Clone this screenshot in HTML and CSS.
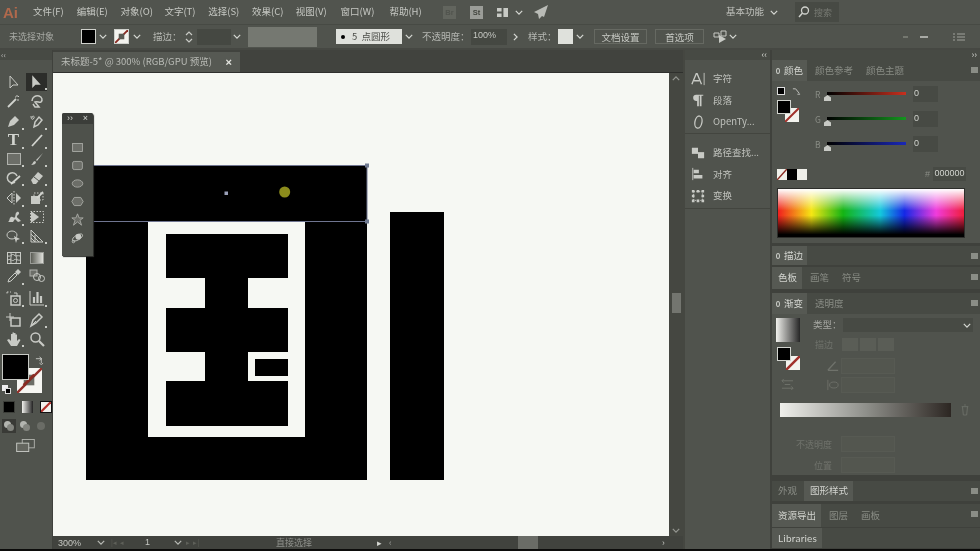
FILE: index.html
```html
<!DOCTYPE html>
<html lang="zh-CN">
<head>
<meta charset="utf-8">
<title>Illustrator</title>
<link rel="stylesheet" href="styles.css">
</head>
<body>
<div class="app">
  <header class="menubar">
    <span class="logo">Ai</span>
    <nav class="menus">
      <span>文件(F)</span><span>编辑(E)</span><span>对象(O)</span><span>文字(T)</span><span>选择(S)</span><span>效果(C)</span><span>视图(V)</span><span>窗口(W)</span><span>帮助(H)</span>
    </nav>
    <span class="app-box dim">Br</span>
    <span class="app-box">St</span>
    <svg class="arrange" viewBox="0 0 14 12"><path d="M1 1h5v4H1zM8 1h5v10H8zM1 7h5v4H1z" fill="#c8cac5"/></svg>
    <svg class="chev menu-chev" viewBox="0 0 10 6"><path d="M1 1l4 4 4-4"/></svg>
    <svg class="rocket" viewBox="0 0 16 16"><path d="M15 1L1 8l4 2 1 5 3-3 2 1z" fill="#b9bbb6"/></svg>
    <span class="workspace">基本功能</span>
    <svg class="chev ws-chev" viewBox="0 0 10 6"><path d="M1 1l4 4 4-4"/></svg>
    <div class="search"><svg viewBox="0 0 14 14"><circle cx="8" cy="5.500" r="3.500" fill="none" stroke="#d0d2cd" stroke-width="1.300"/><path d="M5.500 8L2 12" stroke="#d0d2cd" stroke-width="1.500"/></svg><span>搜索</span></div>
  </header>

  <section class="ctrl">
    <span class="c-nosel">未选择对象</span>
    <span class="sw sw-black"></span>
    <svg class="chev c1" viewBox="0 0 10 6"><path d="M1 1l4 4 4-4"/></svg>
    <span class="sw sw-none"><svg viewBox="0 0 14 14"><path d="M0 14L14 0" stroke="#8a2b22" stroke-width="2"/><rect x="4" y="4" width="6" height="6" fill="#5a5a52"/></svg></span>
    <svg class="chev c2" viewBox="0 0 10 6"><path d="M1 1l4 4 4-4"/></svg>
    <span class="c-label c-stroke">描边：</span>
    <svg class="spin" viewBox="0 0 8 14"><path d="M1 5l3-3 3 3M1 9l3 3 3-3" fill="none" stroke="#c8cac5" stroke-width="1.200"/></svg>
    <span class="field f-stroke"></span>
    <svg class="chev c3" viewBox="0 0 10 6"><path d="M1 1l4 4 4-4"/></svg>
    <span class="field f-light"></span>
    <span class="brush"><i></i>5&nbsp; 点圆形</span>
    <svg class="chev c4" viewBox="0 0 10 6"><path d="M1 1l4 4 4-4"/></svg>
    <span class="c-label c-op">不透明度：</span>
    <span class="field f-op">100%</span>
    <svg class="chev c5" viewBox="0 0 6 10"><path d="M1 1l4 4-4 4"/></svg>
    <span class="c-label c-style">样式：</span>
    <span class="sw sw-style"></span>
    <svg class="chev c6" viewBox="0 0 10 6"><path d="M1 1l4 4 4-4"/></svg>
    <span class="btn b-doc">文档设置</span>
    <span class="btn b-pref">首选项</span>
    <svg class="c-arr" viewBox="0 0 14 14"><path d="M1 3h5v4H1zM8 1h5v5H8z" fill="none" stroke="#c8cac5"/><path d="M6 5l7 4-7 4z" fill="#c8cac5"/></svg>
    <svg class="chev c7" viewBox="0 0 10 6"><path d="M1 1l4 4 4-4"/></svg>
    <span class="c-right"><i class="d1"></i><i class="d2"></i><svg viewBox="0 0 12 8"><path d="M0 1h2M4 1h8M0 4h2M4 4h8M0 7h2M4 7h8" stroke="#9fa29c"/></svg></span>
  </section>

  <div class="main">
    <aside class="tools">
      <div class="collapse">‹‹</div>
      <div class="tool-row g0">
        <b class="t plain"><svg viewBox="0 0 16 16"><path d="M4 2v12l3-3h5z" class="ol"/></svg></b>
        <b class="t on"><svg viewBox="0 0 16 16"><path d="M4 2v12l3-3h5z" class="fl"/></svg></b>
      </div>
      <div class="tool-row">
        <b class="t plain"><svg viewBox="0 0 16 16"><path d="M2 14l8-8" class="th"/><path d="M11 2v2M9 4h1M13 3l-1 1M13 7h-2" class="ol"/></svg></b>
        <b class="t plain"><svg viewBox="0 0 16 16"><path d="M3 8c0-4 4-6 7-5s4 4 2 6c-2 1-3-1-6 0l4 5H6L4 11" class="ol2"/></svg></b>
      </div>
      <div class="tool-row g2">
        <b class="t"><svg viewBox="0 0 16 16"><path d="M2 14l2-6 5-5 4 4-5 5z" class="fl"/></svg></b>
        <b class="t"><svg viewBox="0 0 16 16"><path d="M2 3c0 4 2 4 3 2s-2-3-2 0" class="ol"/><path d="M5 14l1-5 4-5 3 3-4 5z" class="ol2"/></svg></b>
      </div>
      <div class="tool-row">
        <b class="t type">T</b>
        <b class="t"><svg viewBox="0 0 16 16"><path d="M3 14L13 3" class="th"/></svg></b>
      </div>
      <div class="tool-row">
        <b class="t"><svg viewBox="0 0 16 16"><rect x="1.500" y="2.500" width="13" height="11" class="rc"/></svg></b>
        <b class="t"><svg viewBox="0 0 16 16"><path d="M14 2L7 9l1 1zM6 10c-2 0-2 3-4 4 3 0 5-1 5-3z" class="fl"/></svg></b>
      </div>
      <div class="tool-row">
        <b class="t"><svg viewBox="0 0 16 16"><path d="M9 12a5 5 0 1 1 2-6" class="ol2"/><path d="M5 14l9-8" class="th"/></svg></b>
        <b class="t"><svg viewBox="0 0 16 16"><path d="M2 10l7-8 5 4-7 8H4z" class="fl"/><path d="M5 7l5 4" stroke="#51544e"/></svg></b>
      </div>
      <div class="tool-row g2">
        <b class="t"><svg viewBox="0 0 16 16"><path d="M6 3L1 8l5 5z" class="ol"/><path d="M10 3l5 5-5 5z" class="fl"/><path d="M8 1v14" class="dash"/></svg></b>
        <b class="t"><svg viewBox="0 0 16 16"><path d="M2 6h9v8H2z" class="fl"/><path d="M5 6V3h9v7h-3" class="dash"/><path d="M8 8l6-6" class="th"/></svg></b>
      </div>
      <div class="tool-row">
        <b class="t"><svg viewBox="0 0 16 16"><path d="M2 13c2-1 1-4 3-5s3 2 4 0 0-4 2-5 3 2 1 3-1 3 1 4l2 2-3 1-3-3-2 3z" class="fl"/></svg></b>
        <b class="t plain"><svg viewBox="0 0 16 16"><path d="M2 2l8 6-8 6z" class="fl"/><rect x="1.500" y="2.500" width="13" height="11" class="dash"/></svg></b>
      </div>
      <div class="tool-row">
        <b class="t"><svg viewBox="0 0 16 16"><ellipse cx="6" cy="7" rx="5" ry="4" class="ol"/><path d="M8 8l6 3-3 1-1 3z" class="fl"/></svg></b>
        <b class="t"><svg viewBox="0 0 16 16"><path d="M2 2v12h12zM2 6l8 8M2 10l4 4M6 7v7" class="ol"/></svg></b>
      </div>
      <div class="tool-row g3">
        <b class="t plain"><svg viewBox="0 0 16 16"><rect x="1.500" y="2.500" width="13" height="11" class="ol"/><path d="M2 6c3 1 4-3 6-1s4 0 6 1M2 10c3-2 4 2 6 0s4 1 6 0M5 3c1 3-1 5 0 10M10 3c-1 3 2 5 0 10" class="ol"/></svg></b>
        <b class="t plain"><svg viewBox="0 0 16 16"><defs><linearGradient id="tg"><stop offset="0" stop-color="#55574f"/><stop offset="1" stop-color="#e4e5e0"/></linearGradient></defs><rect x="1.500" y="2.500" width="13" height="11" fill="url(#tg)" stroke="#999b96"/></svg></b>
      </div>
      <div class="tool-row">
        <b class="t"><svg viewBox="0 0 16 16"><path d="M2 14l1-3 6-6 2 2-6 6z" class="ol"/><path d="M9 4l3-3 3 3-3 3z" class="fl"/></svg></b>
        <b class="t plain"><svg viewBox="0 0 16 16"><rect x="1" y="2" width="7" height="6" class="rc"/><circle cx="8" cy="9" r="3.500" class="ol"/><circle cx="12.500" cy="10.500" r="3" class="ol"/></svg></b>
      </div>
      <div class="tool-row g3">
        <b class="t"><svg viewBox="0 0 16 16"><path d="M1 2h4M1 2v3" class="dash"/><path d="M5 6h9v9H5z" class="ol2"/><circle cx="9.500" cy="10.500" r="2" class="ol"/><path d="M8 3h3v3" class="ol"/></svg></b>
        <b class="t"><svg viewBox="0 0 16 16"><path d="M1 1v14h14" class="ol"/><path d="M5 13V7M8.500 13V2M12 13V6" class="thk"/></svg></b>
      </div>
      <div class="tool-row g3">
        <b class="t plain"><svg viewBox="0 0 16 16"><path d="M5 6h9v8H5z" class="ol2"/><path d="M0 5h8M4 1v8" class="ol"/></svg></b>
        <b class="t"><svg viewBox="0 0 16 16"><path d="M2 14l2-6 6-6 3 3-6 6z" class="ol2"/><path d="M2 14l5-5" class="ol"/></svg></b>
      </div>
      <div class="tool-row">
        <b class="t"><svg viewBox="0 0 16 16"><path d="M5 15L1 9l2-1 2 2V3h1.500v5V1.500H8V8V2h1.500v6V3.500H11V10l2-2 1.500 1L11 15z" class="fl"/></svg></b>
        <b class="t plain"><svg viewBox="0 0 16 16"><circle cx="6.500" cy="6.500" r="4.500" class="ol2"/><path d="M10 10l5 5" class="thk"/></svg></b>
      </div>
      <div class="colors">
        <span class="big-fill"></span>
        <span class="big-stroke"><svg viewBox="0 0 26 26"><path d="M0 26L26 0" stroke="#93302a" stroke-width="2.500"/><rect x="7" y="7" width="11" height="11" fill="#55564f" opacity=".85"/><path d="M7 18L18 7" stroke="#8a2b22" stroke-width="3"/></svg></span>
        <svg class="swap" viewBox="0 0 10 10"><path d="M1 3h6v5M5 1L7.500 3 5 5M5 8l2 1.500L9 8" fill="none" stroke="#c8cac5"/></svg>
        <span class="mini-b"></span><span class="mini-w"></span>
      </div>
      <div class="modes">
        <span class="m m-black"></span><span class="m m-grad"></span><span class="m m-none"><svg viewBox="0 0 10 10"><path d="M0 10L10 0" stroke="#b3302a" stroke-width="2.200"/></svg></span>
      </div>
      <div class="modes draw">
        <span class="dm on"><i></i><i></i></span><span class="dm"><i></i><i></i></span><span class="dm off"><i></i></span>
      </div>
      <svg class="screen" viewBox="0 0 20 14"><rect x="6.500" y="0.500" width="13" height="9" fill="none" stroke="#b0b2ad"/><rect x="0.500" y="4.500" width="13" height="9" fill="#64665f" stroke="#c8cac5"/></svg>
    </aside>

    <div class="center">
      <div class="tabbar"><div class="tab"><span>未标题-5* @ 300% (RGB/GPU 预览)</span><em>×</em></div></div>
      <div class="doc">
        <div class="canvas">
          <svg class="art" viewBox="53 73 616 463">
            <rect x="86" y="166" width="281" height="314" fill="#000"/>
            <rect x="148" y="222" width="157" height="215" fill="#f6f8f3"/>
            <path d="M166 234h122v44h-40v30h40v44h-40v29h40v45H166v-45h39v-29h-39v-44h39v-30h-39z" fill="#000"/>
            <rect x="255" y="359" width="33" height="17" fill="#000"/>
            <rect x="390" y="212" width="54" height="268" fill="#000"/>
            <path d="M86 165.500h281v56H86" fill="none" stroke="#6f7590" stroke-width="1"/>
            <rect x="365" y="163.500" width="4" height="4" fill="#6f7a90"/>
            <rect x="365" y="219.500" width="4" height="4" fill="#6f7a90"/>
            <rect x="224.500" y="191.500" width="3.500" height="3.500" fill="#9aa0b8"/>
            <circle cx="284.700" cy="192" r="5.500" fill="#8c8c1c"/>
          </svg>
        </div>
        <div class="vscroll">
          <svg class="chev" viewBox="0 0 10 6"><path d="M1 5l4-4 4 4"/></svg>
          <span class="thumb"></span>
          <svg class="chev" viewBox="0 0 10 6"><path d="M1 1l4 4 4-4"/></svg>
        </div>
      </div>
      <footer class="status">
        <span class="zoomv">300%</span>
        <svg class="chev s1" viewBox="0 0 10 6"><path d="M1 1l4 4 4-4"/></svg>
        <span class="nav">|◂&nbsp;&nbsp;◂</span>
        <span class="pg">1</span>
        <svg class="chev s2" viewBox="0 0 10 6"><path d="M1 1l4 4 4-4"/></svg>
        <span class="nav n2">▸&nbsp;&nbsp;▸|</span>
        <span class="tool-name">直接选择</span>
        <span class="s-play">▸</span>
        <span class="s-back">‹</span>
        <span class="hthumb"></span>
        <span class="s-end">›</span>
      </footer>
    </div>

    <aside class="dock1">
      <div class="strip"><span>‹‹</span></div>
      <div class="group">
        <div class="grip"></div>
        <div class="row"><svg viewBox="0 0 16 16"><path d="M1 14L6 2h1l5 12M3.500 10h6" class="ol2"/><path d="M15 1v14" class="ol"/></svg><span>字符</span></div>
        <div class="row"><svg viewBox="0 0 16 16"><path d="M6 2h8v1h-2v12h-2V3H9v12H7V9a4 3.500 0 0 1-1-7z" class="fl"/></svg><span>段落</span></div>
        <div class="row"><svg viewBox="0 0 16 16"><ellipse cx="8.500" cy="8" rx="4" ry="7" transform="rotate(10 8 8)" class="ol2"/></svg><span>OpenTy...</span></div>
      </div>
      <div class="group g-second">
        <div class="grip"></div>
        <div class="row"><svg viewBox="0 0 16 16"><path d="M1 2h7v7H1z" class="fl"/><path d="M8 7h7v7H8z" class="fl"/></svg><span>路径查找...</span></div>
        <div class="row"><svg viewBox="0 0 16 16"><path d="M2 1v14" class="ol"/><path d="M3 3h6v4H3zM3 9h10v4H3z" class="fl"/></svg><span>对齐</span></div>
        <div class="row"><svg viewBox="0 0 16 16"><path d="M3 3h10v10H3z" class="dash"/><path d="M1 1h3v3H1zM12 1h3v3h-3zM1 12h3v3H1zM12 12h3v3h-3zM6.500 1h3v3h-3zM6.500 12h3v3h-3zM1 6.500h3v3H1zM12 6.500h3v3h-3z" class="fl"/></svg><span>变换</span></div>
      </div>
    </aside>

    <aside class="dock2">
      <div class="strip"><span>››</span></div>
      <section class="panel p-color">
        <div class="ptabs"><span class="ptab on mark"><u></u>颜色</span><span class="ptab">颜色参考</span><span class="ptab">颜色主题</span><i class="pmenu"></i></div>
        <div class="color-body">
          <div class="color-top">
            <div class="fs">
              <div class="fs-icons"><span class="mini"></span><svg viewBox="0 0 10 10"><path d="M1 2h3M6 8h3M4 2l4 5" stroke="#c8cac5" fill="none"/></svg></div>
              <div class="fs-stack"><span class="stroke-s"><svg viewBox="0 0 14 14"><path d="M0 14L14 0" stroke="#a0302a" stroke-width="2"/></svg></span><span class="fill-s"></span></div>
            </div>
            <div class="sliders">
              <div class="sl"><span>R</span><div class="track tr"><i></i></div><b>0</b></div>
              <div class="sl"><span>G</span><div class="track tg"><i></i></div><b>0</b></div>
              <div class="sl"><span>B</span><div class="track tb"><i></i></div><b>0</b></div>
            </div>
          </div>
          <div class="hexrow">
            <span class="qs q-none"><svg viewBox="0 0 10 11"><path d="M0 11L10 0" stroke="#8a2b22" stroke-width="1.500"/></svg></span><span class="qs q-b"></span><span class="qs q-w"></span>
            <span class="hash">#</span><span class="hex">000000</span>
          </div>
          <div class="spectrum"></div>
        </div>
      </section>
      <section class="panel p-stroke">
        <div class="ptabs full"><span class="ptab on mark"><u></u>描边</span><i class="pmenu"></i></div>
      </section>
      <section class="panel p-swatch">
        <div class="ptabs full"><span class="ptab on">色板</span><span class="ptab">画笔</span><span class="ptab">符号</span><i class="pmenu"></i></div>
      </section>
      <section class="panel p-grad">
        <div class="ptabs"><span class="ptab on mark"><u></u>渐变</span><span class="ptab">透明度</span><i class="pmenu"></i></div>
        <div class="grad-top">
          <div class="grad-left">
            <span class="grad-swatch"></span>
            <div class="fs-stack small"><span class="stroke-s"><svg viewBox="0 0 14 14"><path d="M0 14L14 0" stroke="#a0302a" stroke-width="2.500"/></svg></span><span class="fill-s"></span></div>
            <svg class="rev" viewBox="0 0 14 14"><path d="M1 3h12M1 11h12M3 1L1 3l2 2M11 9l2 2-2 2M4 7h6" stroke="#6f726b" fill="none"/></svg>
          </div>
          <div class="grad-right">
            <div class="g-type"><span>类型：</span><div class="select"><svg class="chev" viewBox="0 0 10 6"><path d="M1 1l4 4 4-4"/></svg></div></div>
            <div class="g-dis r1"><span class="lbl">描边</span><i></i><i></i><i></i></div>
            <div class="g-dis r2"><svg viewBox="0 0 14 14"><path d="M1 12L10 2M1 12h12" stroke="#6f726b" fill="none" stroke-width="1.500"/></svg><span class="dis-f"></span></div>
            <div class="g-dis r3"><svg viewBox="0 0 14 14"><ellipse cx="8" cy="7" rx="5" ry="3.500" fill="none" stroke="#6f726b"/><path d="M1 1v12" stroke="#6f726b"/></svg><span class="dis-f"></span></div>
          </div>
        </div>
        <div class="grad-bar-row"><span class="grad-bar"></span><svg viewBox="0 0 12 14"><path d="M2 3h8M3 3l1 10h4l1-10M5 1h2" fill="none" stroke="#6f726b"/></svg></div>
        <div class="g-field f-a"><span>不透明度</span><span class="dis-f"></span></div>
        <div class="g-field f-b"><span>位置</span><span class="dis-f"></span></div>
      </section>
      <section class="panel p-app">
        <div class="ptabs full"><span class="ptab">外观</span><span class="ptab on">图形样式</span><i class="pmenu"></i></div>
      </section>
      <section class="panel p-assets">
        <div class="ptabs full"><span class="ptab on">资源导出</span><span class="ptab">图层</span><span class="ptab">画板</span><i class="pmenu"></i></div>
      </section>
      <section class="panel p-lib">
        <div class="ptabs full"><span class="ptab on latin">Libraries</span></div>
      </section>
    </aside>
  </div>
  <div class="floor"></div>

  <div class="float">
    <div class="f-head"><span>››</span><span>×</span></div>
    <svg viewBox="0 0 16 16"><rect x="2" y="3" width="12" height="10" class="rc"/></svg>
    <svg viewBox="0 0 16 16"><rect x="2" y="3" width="12" height="10" rx="2" class="rc"/></svg>
    <svg viewBox="0 0 16 16"><ellipse cx="8" cy="8" rx="6.500" ry="4.500" class="rc"/></svg>
    <svg viewBox="0 0 16 16"><path d="M4 3h8l3 5-3 5H4L1 8z" class="rc"/></svg>
    <svg viewBox="0 0 16 16"><path d="M8 1l2 5h5l-4 3 2 6-5-4-5 4 2-6-4-3h5z" class="rc"/></svg>
    <svg viewBox="0 0 16 16"><circle cx="9" cy="7" r="3.500" class="fl"/><ellipse cx="8" cy="8" rx="7" ry="3" transform="rotate(-30 8 8)" class="ol"/><circle cx="3" cy="13" r="1.500" class="ol"/></svg>
  </div>
</div>
</body>
</html>
```
FILE: styles.css
```css
* { box-sizing: border-box; }
html, body { margin: 0; height: 100%; background: #50534d; overflow: hidden; }
.app {
  position: relative; width: 980px; height: 551px; display: flex; flex-direction: column;
  background: #50534d; color: #c6c8c3; overflow: hidden; filter: blur(.5px);
  font: 10px/1 "Noto Sans CJK SC", "Noto Sans", sans-serif;
}
svg { display: block; flex: none; }
.chev { fill: none; stroke: #d6d8d3; stroke-width: 1.500; width: 8px; height: 5px; }
.ol { fill: none; stroke: #c8cac5; stroke-width: 1; }
.ol2 { fill: none; stroke: #c8cac5; stroke-width: 1.500; }
.th { fill: none; stroke: #d2d4cf; stroke-width: 1.800; }
.thk { fill: none; stroke: #c8cac5; stroke-width: 2.200; }
.fl { fill: #c8cac5; }
.rc { fill: #6c6e68; stroke: #b0b2ad; stroke-width: 1; }
.dash { fill: none; stroke: #c8cac5; stroke-dasharray: 1.500 1.500; }

/* menu bar */
.menubar { height: 24px; flex: none; display: flex; align-items: center; background: #51544e; }
.logo { width: 33px; padding-left: 3px; font: bold 15px "Liberation Sans", sans-serif; color: #b0694c; }
.menus { display: flex; gap: 13px; width: 396px; font-size: 9.500px; white-space: nowrap; }
.menus span { width: 30.800px; flex: none; }
.menus span:nth-child(7) { margin-right: 1px; }
.menus span:nth-child(8) { margin-right: 5px; }
.app-box { width: 13px; height: 13px; background: #9b9d98; color: #43463f; font: bold 7.500px/13px "Liberation Sans", sans-serif; text-align: center; margin: 0 0 0 14px; }
.app-box.dim { background: #62655e; color: #51544e; }
.arrange { width: 13px; height: 11px; margin-left: 13px; }
.menu-chev { margin-left: 6px; }
.rocket { width: 16px; height: 16px; margin-left: 10px; }
.workspace { margin-left: 177px; color: #c0c2bd; font-size: 9.500px; }
.ws-chev { margin-left: 6px; }
.search { display: flex; align-items: center; gap: 3px; margin-left: 17px; width: 44px; height: 20px; background: #474a44; padding-left: 2px; color: #777a73; font-size: 9px; }
.search svg { width: 14px; height: 14px; }

/* control bar */
.ctrl { height: 26px; flex: none; display: flex; align-items: center; background: #50534d; border-top: 1px solid #474a44; border-bottom: 2px solid #464843; white-space: nowrap; }
.c-nosel { width: 81px; padding-left: 9px; font-size: 9px; color: #a7a9a4; }
.sw { width: 15px; height: 15px; border: 1px solid #cfd1cc; background: #000; }
.sw-none { background: #f3f3ee; margin-left: 7px; }
.sw-none svg { width: 100%; height: 100%; }
.c1 { margin-left: 3px; }
.c2 { margin-left: 4px; }
.c-label { color: #b5b7b2; font-size: 9.500px; }
.c-stroke { margin-left: 12px; width: 30px; }
.spin { width: 8px; height: 14px; margin-left: 2px; }
.field { height: 16px; background: #454842; }
.f-stroke { width: 34px; margin-left: 4px; }
.c3 { margin-left: 2px; }
.f-light { width: 69px; height: 20px; margin-left: 7px; background: #757871; }
.brush { display: flex; align-items: center; width: 66px; height: 15px; margin-left: 19px; background: #dfe1dc; color: #4c4e49; padding-left: 5px; font-size: 9.500px; }
.brush i { width: 4px; height: 4px; border-radius: 50%; background: #000; margin-right: 7px; }
.c4 { margin-left: 3px; }
.c-op { margin-left: 9px; width: 45px; }
.f-op { width: 36px; margin-left: 4px; font: 9px/13px "Liberation Sans", sans-serif; padding-left: 2px; }
.c5 { width: 5px; height: 8px; margin-left: 6px; }
.c-style { margin-left: 10px; width: 30px; }
.sw-style { background: #dfe1dc; border: 0; }
.c6 { margin-left: 3px; }
.btn { height: 15px; line-height: 14px; border: 1px solid #666962; text-align: center; font-size: 9.500px; }
.b-doc { width: 53px; margin-left: 10px; }
.b-pref { width: 49px; margin-left: 8px; }
.c-arr { width: 14px; height: 14px; margin-left: 9px; }
.c7 { margin-left: 2px; }
.c-right { display: flex; align-items: center; margin-left: 166px; gap: 0; }
.c-right i { display: block; width: 5px; height: 2px; background: #74776f; }
.c-right .d2 { width: 8px; background: #a8aaa5; margin-left: 12px; }
.c-right svg { width: 12px; height: 8px; margin-left: 25px; }

/* main layout */
.main { flex: 1; display: flex; min-height: 0; }
.tools { width: 53px; flex: none; background: #50534d; border-right: 1px solid #3f413c; display: flex; flex-direction: column; }
.collapse { height: 10px; font-size: 8px; line-height: 9px; padding-left: 1px; background: #474a44; color: #bbb; flex: none; }
.tool-row { display: flex; justify-content: space-between; padding: 0 3px; height: 18.750px; flex: none; }
.g0 { margin-top: 12.500px; }
.g2 { margin-top: 2px; }
.g3 { margin-top: 3px; }
.t { position: relative; display: flex; align-items: center; justify-content: center; width: 21px; height: 100%; margin-right: 2px; }
.t svg { width: 16px; height: 16px; }
.t.on { background: #2c2d2a; }
.t.on svg { width: 17px; height: 17px; }
.t::after { content: ""; position: absolute; right: 0; bottom: 1px; width: 2px; height: 2px; background: #c8cac5; }
.t.plain::after { display: none; }
.type { font: bold 17px "Liberation Serif", serif; color: #d2d4cf; }
.colors { position: relative; height: 46px; margin-top: 6px; flex: none; }
.big-fill { position: absolute; left: 2px; top: 0; width: 27px; height: 26px; background: #000; border: 1px solid #c8cac5; z-index: 1; }
.big-stroke { position: absolute; left: 17px; top: 14px; width: 25px; height: 25px; background: #f6f6f2; }
.swap { position: absolute; left: 35px; top: 2px; width: 9px; height: 9px; }
.mini-b { position: absolute; left: 5px; top: 34px; width: 6px; height: 6px; background: #000; border: 1px solid #ddd; z-index: 1; }
.mini-w { position: absolute; left: 2px; top: 31px; width: 6px; height: 6px; background: #eee; }
.modes { display: flex; gap: 7px; padding-left: 3px; margin-top: 1px; height: 14px; flex: none; }
.m { width: 12px; height: 12px; }
.m-black { background: #000; border: 1px solid #3b3d38; }
.m-grad { background: linear-gradient(90deg, #f2f2ee, #222); }
.m-none { background: #f2f2ee; border: 1px solid #111; }
.m-none svg { width: 100%; height: 100%; }
.draw { margin-top: 4px; height: 15px; gap: 2px; padding-left: 2px; }
.dm { position: relative; width: 14px; height: 14px; }
.dm.on { background: #393a36; }
.dm i { position: absolute; left: 2px; top: 2px; width: 7px; height: 7px; border-radius: 50%; background: #b3b5b0; }
.dm i + i { left: 5px; top: 5px; background: #83857f; }
.dm.off i { left: 3px; top: 3px; width: 8px; height: 8px; background: #6a6c66; }
.screen { width: 19px; height: 13px; margin: 5px 0 0 16px; }

/* centre */
.center { width: 630px; flex: none; display: flex; flex-direction: column; }
.tabbar { height: 23px; flex: none; background: #41433e; padding-top: 2px; border-bottom: 1px solid #2f302d; }
.tab { display: flex; align-items: center; justify-content: space-between; width: 187px; height: 20px; padding: 0 8px; background: #565953; color: #b9bbb6; white-space: nowrap; font-size: 9.500px; }
.tab em { font: bold 11px "Liberation Sans", sans-serif; color: #e4e5e0; }
.doc { flex: 1; display: flex; min-height: 0; }
.canvas { flex: 1; background: #f6f8f3; }
.art { width: 616px; height: 463px; }
.vscroll { width: 14px; flex: none; background: #454741; display: flex; flex-direction: column; align-items: center; justify-content: space-between; padding: 3px 0; }
.vscroll .chev { opacity: .55; }
.thumb { width: 9px; height: 20px; background: #73756f; margin-top: -4px; }
.status { height: 13px; flex: none; display: flex; align-items: center; background: #41433e; font-size: 9px; white-space: nowrap; color: #a7a9a4; }
.zoomv { width: 42px; padding-left: 5px; font: 9px "Liberation Sans", sans-serif; color: #c6c8c3; }
.s1 { margin-left: 2px; opacity: .8; }
.nav { width: 32px; margin-left: 6px; color: #5e6059; font-size: 7px; }
.n2 { margin-left: 4px; width: 36px; }
.pg { width: 29px; margin-left: 2px; color: #c6c8c3; font-family: "Liberation Sans", sans-serif; }
.s2 { opacity: .8; }
.tool-name { margin-left: 54px; width: 101px; color: #8f918c; }
.s-play { width: 12px; color: #d6d8d3; }
.s-back { width: 129px; color: #9c9e99; }
.hthumb { width: 20px; height: 13px; background: #6a6c66; }
.s-end { margin-left: 124px; color: #c6c8c3; }

/* docks */
.dock1 { width: 87px; flex: none; background: #50534d; border-left: 2px solid #454741; }
.strip { height: 10px; background: #474a44; color: #d2d4cf; font-size: 9px; line-height: 9px; text-align: right; padding-right: 3px; }
.group { height: 74px; border-bottom: 1px solid #43453f; display: flex; flex-direction: column; }
.g-second { height: 75px; }
.grip { height: 8px; }
.row { display: flex; align-items: center; height: 21.500px; padding-left: 6px; color: #bfc1bc; white-space: nowrap; font-size: 9.500px; }
.row svg { width: 14px; height: 14px; margin-right: 8px; }
.dock2 { flex: 1; display: flex; flex-direction: column; background: #3f413c; border-left: 2px solid #3f413c; gap: 3px; min-width: 0; }
.dock2 .strip { margin-bottom: -3px; }
.panel { background: #50534d; }
.ptabs { display: flex; align-items: stretch; height: 21px; background: #474a44; position: relative; color: #898c85; font-size: 9.500px; white-space: nowrap; }
.ptab { display: flex; align-items: center; padding: 0 5px 0 6px; margin-right: 2px; }
.ptab.on { background: #565953; color: #d2d4cf; }
.ptab.mark { padding: 0 4px; }
.ptab u { width: 4px; height: 6px; border: 1px solid #c8cac5; border-radius: 50%; margin-right: 4px; flex: none; }
.latin { font: 10px "Lato", sans-serif; letter-spacing: .2px; }
.pmenu { position: absolute; right: 2px; top: 7px; width: 7px; height: 6px; background: #8a8d86; }
.p-color { height: 183px; }
.color-body { padding: 5px 5px 0; }
.color-top { display: flex; height: 77px; }
.fs { width: 38px; flex: none; }
.fs-icons { display: flex; gap: 7px; height: 12px; padding-top: 1px; }
.fs-icons svg { width: 9px; height: 9px; }
.mini { width: 8px; height: 8px; background: #000; border: 1px solid #ddd; }
.fs-stack { position: relative; width: 22px; height: 22px; margin-top: 2px; }
.fill-s { position: absolute; left: 0; top: 0; width: 14px; height: 14px; background: #000; border: 1px solid #d2d4cf; }
.stroke-s { position: absolute; right: 0; bottom: 0; width: 14px; height: 14px; background: #f3f3ee; }
.stroke-s svg { width: 100%; height: 100%; }
.sliders { flex: 1; display: flex; flex-direction: column; gap: 9px; }
.sl { display: flex; align-items: center; height: 16px; color: #898c85; }
.sl span { width: 10px; margin-right: 2px; font-size: 8.500px; }
.sl b { width: 25px; height: 16px; margin-left: 7px; background: #474a44; color: #d2d4cf; font: 9px/14px "Liberation Sans", sans-serif; padding-left: 1px; }
.track { position: relative; width: 79px; height: 3px; margin-top: -1px; }
.track i { position: absolute; left: -3px; top: 3px; width: 7px; height: 6px; background: #c8cac5; clip-path: polygon(50% 0, 100% 40%, 100% 100%, 0 100%, 0 40%); }
.tr { background: linear-gradient(90deg, #000, #c8301f); }
.tg { background: linear-gradient(90deg, #000, #14951f); }
.tb { background: linear-gradient(90deg, #000, #1a28b8); }
.hexrow { display: flex; align-items: center; height: 14px; margin-top: 4px; }
.qs { width: 10px; height: 11px; }
.qs svg { width: 100%; height: 100%; }
.q-none { background: #efefe9; }
.q-b { background: #000; }
.q-w { background: #efefe9; }
.hash { margin-left: 118px; width: 8px; color: #898c85; font: 9px "Liberation Sans", sans-serif; }
.hex { width: 33px; height: 14px; background: #474a44; color: #d2d4cf; font: 9px/13px "Liberation Sans", sans-serif; text-align: center; }
.spectrum { width: 188px; height: 50px; margin-top: 7px; border: 1px solid #2d2e2b; background:
  linear-gradient(180deg, #fff 0%, rgba(255,255,255,0) 45%, rgba(0,0,0,0) 55%, #000 95%),
  linear-gradient(90deg, #f01e1e 0%, #f5e614 18%, #14b414 35%, #14c8dc 55%, #1428e6 68%, #f03cdc 85%, #f01e3c 100%); }
.p-stroke { height: 19px; }
.p-swatch { height: 22px; margin-top: -1px; }
.ptabs.full { height: 100%; }
.p-grad { height: 182px; margin-top: 1px; }
.grad-top { display: flex; padding: 4px 0 0 4px; height: 90px; }
.grad-left { width: 37px; flex: none; }
.grad-swatch { display: block; width: 24px; height: 24px; background: linear-gradient(90deg, #f0f0ec, #262626); }
.small { margin: 5px 0 0 1px; width: 23px; height: 23px; }
.rev { width: 13px; height: 13px; margin: 8px 0 0 5px; }
.grad-right { flex: 1; }
.g-type { display: flex; align-items: center; height: 14px; }
.g-type span { width: 30px; color: #a5a7a2; font-size: 9.500px; }
.select { flex: 1; height: 14px; margin-right: 7px; background: #474a44; display: flex; align-items: center; justify-content: flex-end; padding-right: 2px; }
.g-dis { display: flex; align-items: center; color: #6f726b; }
.r1 { height: 15px; margin-top: 5px; padding-left: 2px; }
.r1 .lbl { width: 26px; font-size: 9px; }
.r1 i { width: 18px; height: 15px; background: #5a5d56; border: 1px solid #50534d; }
.r2, .r3 { height: 17px; margin-top: 5px; padding-left: 14px; }
.r3 { margin-top: 2px; }
.r2 svg, .r3 svg { width: 12px; height: 12px; margin-right: 2px; }
.dis-f { display: block; width: 54px; height: 16px; background: #53564f; border: 1px solid #575a53; }
.grad-bar-row { display: flex; align-items: center; padding-left: 8px; height: 14px; margin-top: -1px; }
.grad-bar { width: 171px; height: 14px; background: linear-gradient(90deg, #efefeb, #8f908b 50%, #2c2622); }
.grad-bar-row svg { width: 10px; height: 12px; margin-left: 9px; }
.g-field { display: flex; align-items: center; justify-content: flex-end; height: 16px; padding-right: 85px; gap: 9px; color: #6f726b; font-size: 9px; }
.f-a { margin-top: 19px; }
.f-b { margin-top: 5px; }
.p-app { height: 20px; margin-top: 3px; }
.p-assets { height: 23px; margin-top: 0; }
.p-lib { height: 20px; margin-top: -2px; }
.floor { height: 2px; flex: none; background: #0c0c0b; }

/* floating tools panel */
.float { position: absolute; left: 62px; top: 113px; width: 31px; height: 143px; background: #4e514b; box-shadow: 1px 1px 1px #2f302d; display: flex; flex-direction: column; align-items: center; gap: 5px; border-radius: 2px 2px 0 0; }
.f-head { width: 100%; height: 11px; margin-bottom: 12px; background: #3b3d39; color: #d6d8d3; display: flex; justify-content: space-around; font: 9px/10px "Liberation Sans", sans-serif; border-radius: 2px 2px 0 0; }
.float svg { width: 13px; height: 13px; }
```
